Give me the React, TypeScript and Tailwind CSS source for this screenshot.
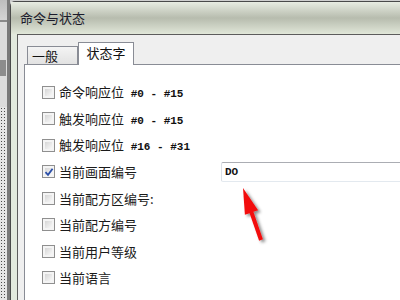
const cjk = { fontFamily: '"Noto Sans CJK SC", "Liberation Sans", sans-serif' };

const rows = [
  { label: "命令响应位", range: "#0 - #15" },
  { label: "触发响应位", range: "#0 - #15" },
  { label: "触发响应位", range: "#16 - #31" },
  { label: "当前画面编号", checked: true, input: "DO" },
  { label: "当前配方区编号:" },
  { label: "当前配方编号" },
  { label: "当前用户等级" },
  { label: "当前语言" },
];

function CheckBox({ checked }: { checked?: boolean }) {
  return (
    <span className="relative flex h-[13px] w-[13px] shrink-0 border border-[#8f8f8f] bg-[#f4f4f4] p-[2px]">
      <span className="h-full w-full bg-gradient-to-br from-[#d6d6d6] to-[#f8f8f8]" />
      {checked && (
        <svg className="absolute left-[1px] top-[1px]" width="10" height="10" viewBox="0 0 10 10">
          <path d="M1.5 5.2 L4 7.8 L8.6 1.8" fill="none" stroke="#2a4ea8" strokeWidth="1.8" />
        </svg>
      )}
    </span>
  );
}

export default function App() {
  return (
    <div className="relative flex h-[300px] w-[400px] overflow-hidden bg-[#cfcfcf]" style={cjk}>
      {/* background app strip */}
      <div className="flex w-[10px] shrink-0 flex-col border-r-[3px] border-[#7a7a7a]">
        <div className="h-[22px] bg-gradient-to-b from-[#bdbdbd] to-[#d4d4d4] border-b-2 border-[#8a8a8a]" />
        <div className="flex h-[85px] flex-col bg-[#dcdcdc] pt-[38px]">
          <div className="h-[16px] w-[6px] bg-[#8c8c8c]" />
        </div>
        <div className="flex-1 bg-[#e6e6e6] bg-[radial-gradient(circle,#4a4a4a_0.8px,transparent_1px)] bg-[length:3px_3px]" />
      </div>

      {/* dialog */}
      <div className="mt-[1px] flex flex-1 flex-col rounded-tl-[5px] border-l border-t border-[#4a4a4a] bg-[#e2e9dd]">
        <div className="flex h-[32px] shrink-0 items-center bg-gradient-to-b from-[#e8ece2] via-[#b7bcae] to-[#e1e7d9] pl-[9px] text-[13px] text-[#1b1b2b]">
          命令与状态
        </div>
        <div className="flex flex-1 pl-[6px]">
          <div className="flex flex-1 flex-col border-l border-t border-[#5c5c5c] bg-[#efefef] pl-[6px]">
            {/* tabs */}
            <div className="flex h-[29px] items-end pl-[3px]">
              <div className="flex h-[18px] w-[51px] items-center border border-b-0 border-[#898c95] bg-gradient-to-b from-[#f4f4f4] to-[#e2e2e2] pl-[4px] text-[13px] text-[#111]">
                一般
              </div>
              <div className="relative z-10 -mb-px flex h-[23px] w-[56px] items-center justify-center border border-b-0 border-[#898c95] bg-white pb-[2px] text-[13px] text-[#111]">
                状态字
              </div>
            </div>
            {/* panel */}
            <div className="flex flex-1 flex-col border-l border-t border-[#898c95] bg-white pl-[17px] pt-[14px]">
              {rows.map((r, i) => (
                <div key={i} className="flex h-[26.5px] shrink-0 items-center gap-[4px] text-[13px] text-[#1a1a1a]">
                  <CheckBox checked={r.checked} />
                  {r.input ? (
                    <>
                      <span className="w-[158px] shrink-0 whitespace-nowrap">{r.label}</span>
                      <div className="flex h-[20px] w-[220px] shrink-0 items-center rounded-[2px] border border-[#dbdfe6] border-t-[#abadb3] border-b-[#e3e9ef] pl-[3px] font-['Liberation_Mono',monospace] text-[11px] font-bold text-[#111]">
                        {r.input}
                      </div>
                    </>
                  ) : (
                    <span className="whitespace-nowrap">
                      {r.label}
                      {r.range && (
                        <span className="font-['Liberation_Mono',monospace] text-[11px] font-bold text-[#111]"> {r.range}</span>
                      )}
                    </span>
                  )}
                </div>
              ))}
            </div>
          </div>
        </div>
      </div>

      {/* annotation arrow */}
      <svg className="pointer-events-none absolute left-0 top-0" width="400" height="300" viewBox="0 0 400 300">
        <defs>
          <filter id="sh" x="-50%" y="-50%" width="200%" height="200%">
            <feDropShadow dx="2.5" dy="2" stdDeviation="1.6" floodColor="#000" floodOpacity="0.45" />
          </filter>
        </defs>
        <polygon
          points="243,188 258.1,210.2 253.4,211.8 262.9,239.3 259.1,240.7 249.6,213.2 244.9,214.8"
          fill="#f20f0f"
          filter="url(#sh)"
        />
      </svg>
    </div>
  );
}
